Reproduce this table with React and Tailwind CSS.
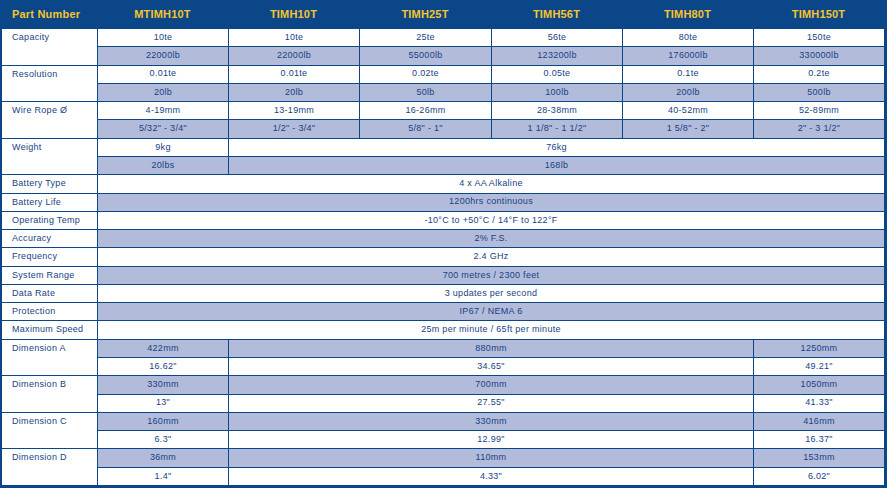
import React from 'react';

const BLUE = 'border-[#0b4688]';

const models = ['MTIMH10T', 'TIMH10T', 'TIMH25T', 'TIMH56T', 'TIMH80T', 'TIMH150T'];

// each spec: label + one or two sub-rows; a sub-row is a list of [text, span]
const specs = [
  { label: 'Capacity', rows: [
    { shade: false, cells: ['10te', '10te', '25te', '56te', '80te', '150te'] },
    { shade: true, cells: ['22000lb', '22000lb', '55000lb', '123200lb', '176000lb', '330000lb'] },
  ] },
  { label: 'Resolution', rows: [
    { shade: false, cells: ['0.01te', '0.01te', '0.02te', '0.05te', '0.1te', '0.2te'] },
    { shade: true, cells: ['20lb', '20lb', '50lb', '100lb', '200lb', '500lb'] },
  ] },
  { label: 'Wire Rope Ø', rows: [
    { shade: false, cells: ['4-19mm', '13-19mm', '16-26mm', '28-38mm', '40-52mm', '52-89mm'] },
    { shade: true, cells: ['5/32" - 3/4"', '1/2" - 3/4"', '5/8" - 1"', '1 1/8" - 1 1/2"', '1 5/8" - 2"', '2" - 3 1/2"'] },
  ] },
  { label: 'Weight', rows: [
    { shade: false, cells: ['9kg', ['76kg', 5]] },
    { shade: true, cells: ['20lbs', ['168lb', 5]] },
  ] },
  { label: 'Battery Type', rows: [{ shade: false, cells: [['4 x AA Alkaline', 6]] }] },
  { label: 'Battery Life', rows: [{ shade: true, cells: [['1200hrs continuous', 6]] }] },
  { label: 'Operating Temp', rows: [{ shade: false, cells: [['-10°C to +50°C / 14°F to 122°F', 6]] }] },
  { label: 'Accuracy', rows: [{ shade: true, cells: [['2% F.S.', 6]] }] },
  { label: 'Frequency', rows: [{ shade: false, cells: [['2.4 GHz', 6]] }] },
  { label: 'System Range', rows: [{ shade: true, cells: [['700 metres / 2300 feet', 6]] }] },
  { label: 'Data Rate', rows: [{ shade: false, cells: [['3 updates per second', 6]] }] },
  { label: 'Protection', rows: [{ shade: true, cells: [['IP67 / NEMA 6', 6]] }] },
  { label: 'Maximum Speed', rows: [{ shade: false, cells: [['25m per minute / 65ft per minute', 6]] }] },
  { label: 'Dimension A', rows: [
    { shade: true, cells: ['422mm', ['880mm', 4], '1250mm'] },
    { shade: false, cells: ['16.62"', ['34.65"', 4], '49.21"'] },
  ] },
  { label: 'Dimension B', rows: [
    { shade: true, cells: ['330mm', ['700mm', 4], '1050mm'] },
    { shade: false, cells: ['13"', ['27.55"', 4], '41.33"'] },
  ] },
  { label: 'Dimension C', rows: [
    { shade: true, cells: ['160mm', ['330mm', 4], '416mm'] },
    { shade: false, cells: ['6.3"', ['12.99"', 4], '16.37"'] },
  ] },
  { label: 'Dimension D', rows: [
    { shade: true, cells: ['36mm', ['110mm', 4], '153mm'] },
    { shade: false, cells: ['1.4"', ['4.33"', 4], '6.02"'] },
  ] },
];

const spanClass = { 1: 'col-span-1', 4: 'col-span-4', 5: 'col-span-5', 6: 'col-span-6' };

export default function App() {
  return (
    <div
      className={`w-[887px] h-[488px] bg-white border-l-2 border-r-[3px] border-b-[3px] ${BLUE} text-[#173f84] flex flex-col`}
      style={{ fontFamily: '"Liberation Sans", Arial, sans-serif' }}
    >
      {/* header */}
      <div className="h-[28px] shrink-0 bg-[#0b4688] grid grid-cols-[95px_131px_131px_132px_131px_131px_1fr] items-center text-[#f6c42c] font-bold text-[11px] tracking-[0.2px]">
        <div className="pl-[10px]">Part Number</div>
        {models.map((m) => (
          <div key={m} className="text-center">{m}</div>
        ))}
      </div>

      {/* body */}
      <div className="flex-1 grid grid-cols-[95px_131px_131px_132px_131px_131px_1fr] grid-rows-[repeat(25,1fr)] text-[9px] tracking-[0.3px]">
        {specs.map((spec) => (
          <React.Fragment key={spec.label}>
            <div className={`${spec.rows.length === 2 ? 'row-span-2' : ''} border-t ${BLUE} pl-[10px] pt-[3px] leading-[11px]`}>
              {spec.label}
            </div>
            {spec.rows.map((row, ri) =>
              row.cells.map((c, ci) => {
                const [text, span] = Array.isArray(c) ? c : [c, 1];
                return (
                  <div
                    key={`${ri}-${ci}`}
                    className={`${spanClass[span]} border-t border-l ${BLUE} flex items-center justify-center ${row.shade ? 'bg-[#b2bcda]' : 'bg-white'}`}
                  >
                    {text}
                  </div>
                );
              })
            )}
          </React.Fragment>
        ))}
      </div>
    </div>
  );
}
